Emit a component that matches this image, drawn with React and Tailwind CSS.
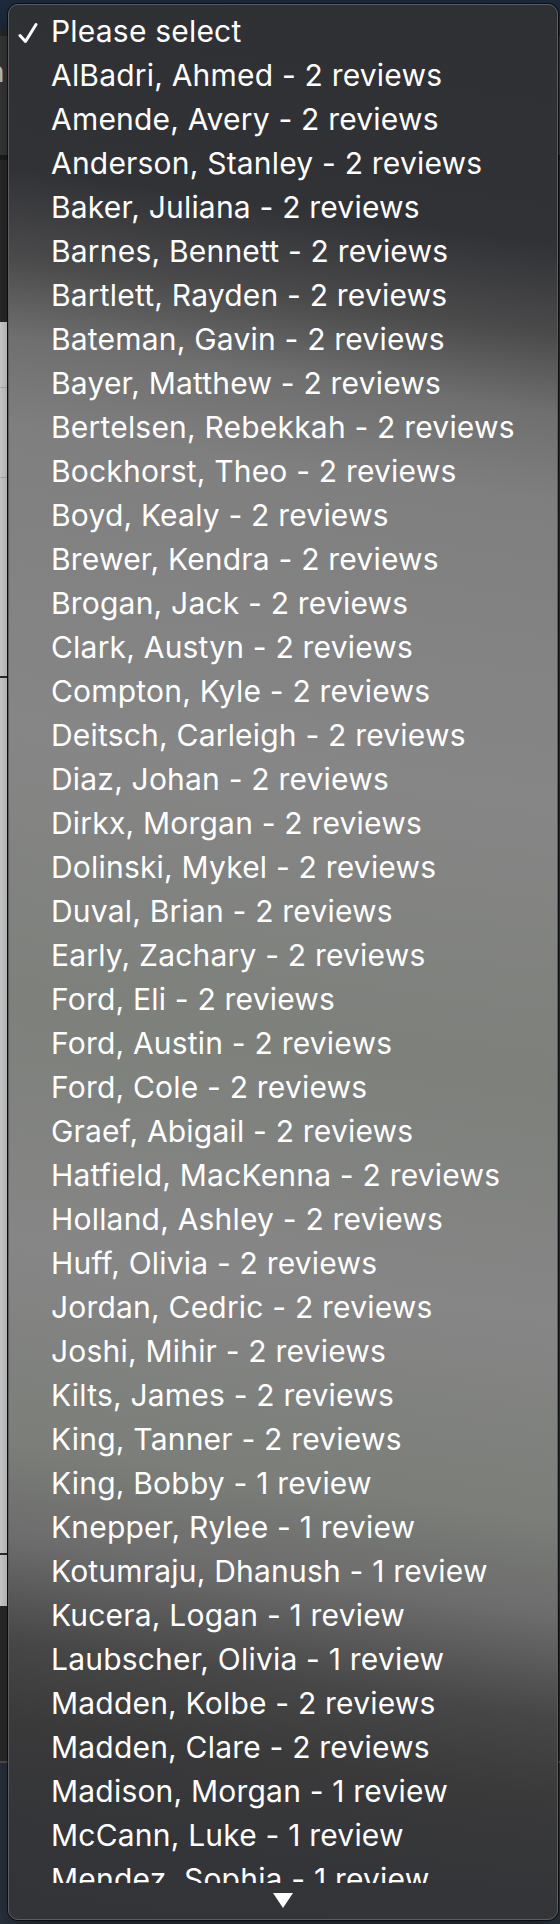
const options = [
  'AlBadri, Ahmed - 2 reviews',
  'Amende, Avery - 2 reviews',
  'Anderson, Stanley - 2 reviews',
  'Baker, Juliana - 2 reviews',
  'Barnes, Bennett - 2 reviews',
  'Bartlett, Rayden - 2 reviews',
  'Bateman, Gavin - 2 reviews',
  'Bayer, Matthew - 2 reviews',
  'Bertelsen, Rebekkah - 2 reviews',
  'Bockhorst, Theo - 2 reviews',
  'Boyd, Kealy - 2 reviews',
  'Brewer, Kendra - 2 reviews',
  'Brogan, Jack - 2 reviews',
  'Clark, Austyn - 2 reviews',
  'Compton, Kyle - 2 reviews',
  'Deitsch, Carleigh - 2 reviews',
  'Diaz, Johan - 2 reviews',
  'Dirkx, Morgan - 2 reviews',
  'Dolinski, Mykel - 2 reviews',
  'Duval, Brian - 2 reviews',
  'Early, Zachary - 2 reviews',
  'Ford, Eli - 2 reviews',
  'Ford, Austin - 2 reviews',
  'Ford, Cole - 2 reviews',
  'Graef, Abigail - 2 reviews',
  'Hatfield, MacKenna - 2 reviews',
  'Holland, Ashley - 2 reviews',
  'Huff, Olivia - 2 reviews',
  'Jordan, Cedric - 2 reviews',
  'Joshi, Mihir - 2 reviews',
  'Kilts, James - 2 reviews',
  'King, Tanner - 2 reviews',
  'King, Bobby - 1 review',
  'Knepper, Rylee - 1 review',
  'Kotumraju, Dhanush - 1 review',
  'Kucera, Logan - 1 review',
  'Laubscher, Olivia - 1 review',
  'Madden, Kolbe - 2 reviews',
  'Madden, Clare - 2 reviews',
  'Madison, Morgan - 1 review',
  'McCann, Luke - 1 review',
  'Mendez, Sophia - 1 review',
]

export default function App() {
  return (
    <div className="relative h-[1924px] w-[560px] overflow-hidden bg-[#2b3541] font-['Inter','Noto_Sans',sans-serif]">
      {/* page behind the popup */}
      <div className="flex flex-col">
        <div className="h-[30px] bg-[#1e2c3e]" />
        <div className="h-[6px] bg-[#2a2a2a]" />
        <div className="h-[119px] bg-[#3b3b3b] pt-[22px] text-[28px] leading-none text-[#d8d8d8]">
          <span className="-ml-[12px]">n</span>
        </div>
        <div className="h-[5px] bg-[#1f1f1f]" />
        <div className="h-[162px] bg-[#2d2d2d]" />
        <div className="flex h-[1284px] w-[9px] flex-col border-r-2 border-[#2a2a2a] bg-[#e7e7e7]">
          <div className="h-[65px]" />
          <div className="h-[90px] border-t border-[#c3c8cf]" />
          <div className="h-[199px] border-t border-[#c3c8cf]" />
          <div className="h-[877px] border-t-2 border-[#333]" />
          <div className="border-t-2 border-[#333]" />
        </div>
        <div className="h-[155px] bg-[#2e2e2e]" />
        <div className="h-[2px] bg-[#585858]" />
      </div>

      {/* native select popup */}
      <div className="absolute left-[8px] top-[4px] flex h-[1916px] w-[550px] flex-col overflow-hidden rounded-[10px] border border-[#5c5d60] bg-[linear-gradient(188deg,#2f3034_0%,#313236_12%,#4a4a4b_16.5%,#6f6f6f_20.5%,#7f7f7f_25%,#868686_40%,#7d807b_54%,#868686_66%,#7b7e79_76%,#6c6c6c_81%,#474747_86%,#3a3a3b_90%,#343538_95%,#333438_100%)] shadow-[0_0_0_1px_rgba(0,0,0,0.6),0_10px_30px_rgba(0,0,0,0.5)]">
        <div className="h-[1878px] overflow-hidden pt-[4px] text-[30px] leading-[44px] tracking-[0.2px] text-white">
          <div className="relative h-[44px] whitespace-nowrap pl-[42px]">
            <svg className="absolute left-[9px] top-[13px] h-[22px] w-[20px]" viewBox="0 0 20 22" fill="none">
              <path d="M2 13.5 L7.5 19.5 L18 2.5" stroke="white" strokeWidth="3" strokeLinecap="round" strokeLinejoin="round" />
            </svg>
            Please select
          </div>
          {options.map((o) => (
            <div key={o} className="h-[44px] whitespace-nowrap pl-[42px]">
              {o}
            </div>
          ))}
        </div>
        <div className="flex flex-1 justify-center pt-[10px]">
          <svg className="h-[15px] w-[20px]" viewBox="0 0 20 15">
            <path d="M0 0 H20 L10 15 Z" fill="white" />
          </svg>
        </div>
      </div>
    </div>
  )
}
